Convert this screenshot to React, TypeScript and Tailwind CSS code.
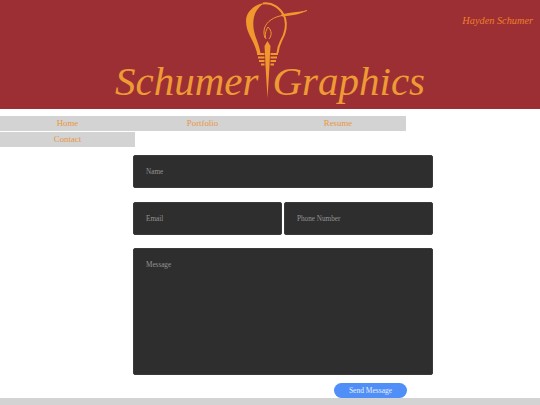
export default function App() {
  const serif = "font-['Liberation_Serif',serif]";
  const field =
    "block bg-[#2e2e2e] rounded-[2px] border border-[#3a3a3a] px-3 text-[7.200px] text-[#999] placeholder:text-[#949494] outline-none font-['Liberation_Serif',serif]";
  return (
    <div className={`w-[540px] h-[405px] overflow-hidden bg-white flex flex-col ${serif}`}>
      <header className="relative h-[109px] shrink-0 bg-[#9c2f33] flex flex-col items-center">
        <svg className="absolute left-[240px] top-0" width="72" height="102" viewBox="240 0 72 102" fill="none">
          <path
            d="M265 3C254 4 246 12 246 21C246 31 251 37 253.500 43C255 46.500 256 49 257 53L260.500 53C259.500 47 257.500 42 255.500 36.500C253.500 30 252.500 24 254 17C255.500 11 259 6 265 3Z"
            fill="#f0972e"
          />
          <path
            d="M263 3.500C272 2 281 8 285 18C287.500 27 284.500 35 281 41C279 45 278 48 277.500 53"
            stroke="#f0972e"
            strokeWidth="2"
          />
          <path
            d="M307 10.500C298 14 290 14 282 15.500C274 17 267 21 264.500 28C263.500 32 264 35 265 38"
            stroke="#f0972e"
            strokeWidth="1"
          />
          <path d="M307 10.500C299 12 289 12.500 281 14.500L282 16.500C291 15.500 300 14.500 307 10.500Z" fill="#f0972e" />
          <path
            d="M268 27C272 31 272 35 269 39M268 27C265.500 31 264.500 35 266 39"
            stroke="#f0972e"
            strokeWidth="1"
          />
          <path d="M267.500 41L270.500 46L270 54L269.500 66L267.500 98L265.500 66L265 54L264.500 46Z" fill="#f0972e" />
          <path
            d="M257 54H264.500M270.500 54H278M258 57.500H264.500M270.500 57.500H277M259 61H264.500M270.500 61H276M261 64.500H264.500M270.500 64.500H274"
            stroke="#f0972e"
            strokeWidth="2"
          />
        </svg>
        <div className="absolute right-[7px] top-[14px] text-[10.300px] leading-[14px] italic text-[#ee7f2c]">Hayden Schumer</div>
        <div className="mt-[58px] flex gap-[14px] text-[41px] leading-[47px] italic text-[#ee9a35]">
          <span>Schumer</span>
          <span>Graphics</span>
        </div>
      </header>

      <nav className="mt-[7px] w-[406px] flex flex-wrap gap-y-px text-[8.800px] leading-[15px] text-center text-[#e8973f]">
        <a className="w-[135px] bg-[#d3d3d3]">Home</a>
        <a className="w-[135px] bg-[#d3d3d3]">Portfolio</a>
        <a className="w-[136px] bg-[#d3d3d3]">Resume</a>
        <a className="w-[135px] bg-[#d3d3d3]">Contact</a>
      </nav>

      <form className="ml-[133px] mt-[8px] w-[300px] flex flex-col">
        <input className={`${field} w-full h-[33px]`} placeholder="Name" />
        <div className="mt-[14px] flex gap-[2px]">
          <input className={`${field} w-[149px] h-[33px]`} placeholder="Email" />
          <input className={`${field} w-[149px] h-[33px]`} placeholder="Phone Number" />
        </div>
        <textarea className={`${field} mt-[13px] w-full h-[127px] py-3 resize-none leading-[9px]`} placeholder="Message" />
        <button
          type="button"
          className="mt-[8px] ml-[201px] w-[73px] h-[15px] rounded-full bg-[#4f8ff7] text-[7.500px] leading-[15px] text-[#e6eefc] text-center"
        >
          Send Message
        </button>
      </form>

      <footer className="flex-1 bg-[#d3d3d3]" />
    </div>
  );
}
